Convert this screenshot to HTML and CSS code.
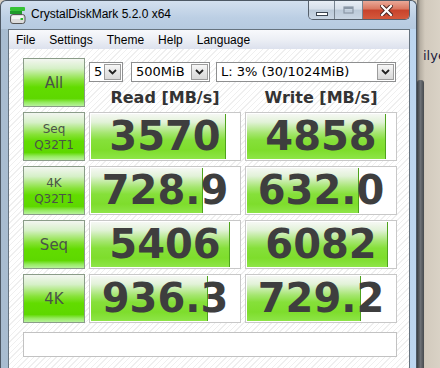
FILE: index.html
```html
<!DOCTYPE html>
<html>
<head>
  <meta charset="utf-8">
  <link rel="stylesheet" href="styles.css">
</head>
<body>
  <div class="desk">
    <div class="window">
      <div class="titlebar">
        <svg class="appicon" width="16" height="17" viewBox="0 0 16 17">
          <rect x="0" y="0" width="15" height="4" rx="1" fill="#35c236"/>
          <rect x="0" y="4" width="12" height="3" fill="#1f9a2a"/>
          <rect x="0.5" y="7.5" width="14.5" height="9" rx="2.5" fill="#dcdcdc" stroke="#555"/>
          <rect x="2" y="9" width="11" height="3" fill="#f4f4f4"/>
          <rect x="10.5" y="11" width="2.5" height="2" fill="#2dbb2d"/>
        </svg>
        <span class="title">CrystalDiskMark 5.2.0 x64</span>
        <div class="caption">
          <div class="cbtn min">
            <svg width="12" height="4" viewBox="0 0 12 4"><rect x="0.5" y="0.5" width="11" height="3" fill="#fff" stroke="#3a4450"/></svg>
          </div>
          <div class="cbtn max">
            <svg width="11" height="8" viewBox="0 0 11 8"><rect x="1" y="1" width="9" height="6" fill="none" stroke="#8a97a6" stroke-width="1.2"/><rect x="1" y="1" width="9" height="2" fill="#8a97a6"/></svg>
          </div>
          <div class="cbtn close">
            <svg width="13" height="11" viewBox="0 0 13 11"><path d="M2 1 L11 10 M11 1 L2 10" stroke="#4a2520" stroke-width="4.2" stroke-linecap="square"/><path d="M2 1 L11 10 M11 1 L2 10" stroke="#fff" stroke-width="2.2" stroke-linecap="square"/></svg>
          </div>
        </div>
      </div>
      <div class="frame">
        <div class="menu">
          <span>File</span>
          <span>Settings</span>
          <span>Theme</span>
          <span>Help</span>
          <span>Language</span>
        </div>
        <div class="client">
          <div class="board">
            <div class="btn big">All</div>
            <div class="top">
              <div class="selects">
                <div class="sel s1"><span class="v">5</span><span class="a"><svg width="9" height="6" viewBox="0 0 9 6"><polyline points="1,1 4.5,4.5 8,1" fill="none" stroke="#222" stroke-width="1.8"/></svg></span></div>
                <div class="sel s2"><span class="v">500MiB</span><span class="a"><svg width="9" height="6" viewBox="0 0 9 6"><polyline points="1,1 4.5,4.5 8,1" fill="none" stroke="#222" stroke-width="1.8"/></svg></span></div>
                <div class="sel s3"><span class="v">L: 3% (30/1024MiB)</span><span class="a"><svg width="9" height="6" viewBox="0 0 9 6"><polyline points="1,1 4.5,4.5 8,1" fill="none" stroke="#222" stroke-width="1.8"/></svg></span></div>
              </div>
              <div class="heads">
                <div>Read [MB/s]</div>
                <div>Write [MB/s]</div>
              </div>
            </div>

            <div class="btn"><span>Seq</span><span>Q32T1</span></div>
            <div class="val"><div class="fill" style="width: 91%"></div><div class="num">3570</div></div>
            <div class="val"><div class="fill" style="width: 94%"></div><div class="num">4858</div></div>

            <div class="btn"><span>4K</span><span>Q32T1</span></div>
            <div class="val"><div class="fill" style="width: 76%"></div><div class="num">728.9</div></div>
            <div class="val"><div class="fill" style="width: 76%"></div><div class="num">632.0</div></div>

            <div class="btn big">Seq</div>
            <div class="val"><div class="fill" style="width: 94%"></div><div class="num">5406</div></div>
            <div class="val"><div class="fill" style="width: 95%"></div><div class="num">6082</div></div>

            <div class="btn big">4K</div>
            <div class="val"><div class="fill" style="width: 79%"></div><div class="num">936.3</div></div>
            <div class="val"><div class="fill" style="width: 77%"></div><div class="num">729.2</div></div>

            <div class="status"></div>
          </div>
        </div>
      </div>
    </div>
    <div class="side">
      <span class="ilye">ilye</span>
      <div class="strip"></div>
    </div>
  </div>
</body>
</html>
```

FILE: styles.css
```css
html,
body {
  margin: 0;
  width: 440px;
  height: 368px;
  overflow: hidden;
}

body {
  background: #d6cec2;
  font-family: "DejaVu Sans", sans-serif;
}

.desk {
  display: flex;
  height: 368px;
}

/* window chrome */
.window {
  width: 415px;
  height: 367px;
  flex: none;
  border: 1px solid #4d5864;
  border-bottom: none;
  border-radius: 6px 6px 0 0;
  background: linear-gradient(90deg, #a8bcd0 0, #b9cce0 50%, #bdd6f0 100%);
  display: flex;
  flex-direction: column;
}

.titlebar {
  height: 28px;
  flex: none;
  display: flex;
  align-items: flex-start;
  padding-left: 9px;
  border-radius: 6px 6px 0 0;
  background: linear-gradient(#d3e0ef, #bccfe4 60%, #b6cae0);
}

.appicon {
  margin-top: 6px;
}

.title {
  margin: 6px 0 0 5px;
  font: 12px/14px "Liberation Sans", sans-serif;
  color: #000;
}

.caption {
  margin-left: auto;
  margin-right: 6px;
  display: flex;
  height: 18px;
  border: 1px solid #56606c;
  border-top: none;
  border-radius: 0 0 5px 5px;
  overflow: hidden;
}

.cbtn {
  display: flex;
  align-items: center;
  justify-content: center;
}

.min,
.max {
  background: linear-gradient(#e8eef5 0, #d6dfea 45%, #bccad9 50%, #c9d6e4 100%);
  border-right: 1px solid #77838f;
}

.min {
  width: 26px;
  align-items: flex-end;
  padding-bottom: 3px;
  box-sizing: border-box;
}

.max {
  width: 27px;
}

.close {
  width: 46px;
  background: linear-gradient(#eaa998 0, #d9765f 45%, #c8422b 50%, #d4593c 100%);
}

.frame {
  flex: 1;
  margin: 0 6px 0 7px;
  border: 1px solid #66737f;
  border-bottom: none;
  display: flex;
  flex-direction: column;
}

.menu {
  height: 19px;
  flex: none;
  display: flex;
  align-items: center;
  font: 12px "Liberation Sans", sans-serif;
  color: #000;
  background: linear-gradient(#f8f9fc, #eceff5 50%, #dce1ed);
}

.menu span {
  padding: 0 7px;
}

.client {
  flex: 1;
  padding: 9px 0 0 14px;
  background: repeating-linear-gradient(135deg, #ffffff 0 3px, #efefef 3px 4px);
}

/* benchmark board */
.board {
  display: grid;
  grid-template-columns: 62px 152px 152px;
  grid-template-rows: repeat(5, 49px) 29px;
  column-gap: 4px;
  row-gap: 5px;
}

.btn {
  box-sizing: border-box;
  border: 1px solid #8a9c88;
  background: linear-gradient(#f3f6f1 0, #d6f0c8 20%, #86e236 46%, #62dc00 60%, #5ed800 84%, #94ea5e 92%, #b8f29c 100%);
  display: flex;
  flex-direction: column;
  align-items: center;
  justify-content: center;
  color: #4a5448;
  font-size: 12px;
  line-height: 16px;
}

.btn.big {
  font-size: 15px;
}

.top {
  grid-column: 2 / 4;
  display: flex;
  flex-direction: column;
}

.selects {
  display: flex;
  margin-top: 4px;
  height: 20px;
}

.sel {
  box-sizing: border-box;
  display: flex;
  border: 1px solid #8e8f90;
  background: #fff;
}

.s1 {
  width: 34px;
}

.s2 {
  width: 79px;
  margin-left: 8px;
}

.s3 {
  width: 180px;
  margin-left: 6px;
}

.sel .v {
  flex: 1;
  padding-left: 4px;
  font-size: 13px;
  line-height: 18px;
  color: #000;
  white-space: nowrap;
}

.sel .a {
  width: 15px;
  margin: 1px;
  border: 1px solid #9c9c9c;
  background: linear-gradient(#f7f7f7, #e6e6e6 50%, #d8d8d8);
  display: flex;
  align-items: center;
  justify-content: center;
}

.heads {
  display: grid;
  grid-template-columns: 152px 152px;
  column-gap: 4px;
  margin-top: 6px;
  font: bold 16px/20px "DejaVu Sans", sans-serif;
  color: #333;
  text-align: center;
}

.val {
  box-sizing: border-box;
  display: grid;
  border: 1px solid #c8c8c8;
  padding: 1px;
  background: #fff;
}

.val > div {
  grid-area: 1 / 1;
}

.fill {
  box-sizing: border-box;
  height: 100%;
  border-right: 1px solid #4ea31c;
  background: linear-gradient(#f6f8f4 0, #e2f2d8 18%, #a6e672 42%, #86e03a 58%, #7edd2c 80%, #8ee548 100%);
}

.num {
  font: bold 40px/45px "DejaVu Sans", sans-serif;
  color: #3e3e3e;
  text-align: center;
}

.status {
  grid-column: 1 / -1;
  margin-top: 4px;
  border: 1px solid #c2c2c2;
  background: #fff;
}

/* desktop behind */
.side {
  flex: 1;
  display: flex;
  flex-direction: column;
  background: linear-gradient(90deg, #6f6c68 0, #b5aea2 3px, #d2cabd 8px, #dcd5c9 100%);
}

.ilye {
  margin: 48px 0 0 6px;
  font-size: 13px;
  line-height: 16px;
  color: #1c1c40;
  white-space: nowrap;
}

.strip {
  margin-top: 16px;
  width: 7px;
  flex: 1;
  border-radius: 3px 3px 0 0;
  background: linear-gradient(90deg, #3a3e43, #6c7075 50%, #45494d);
}
```
